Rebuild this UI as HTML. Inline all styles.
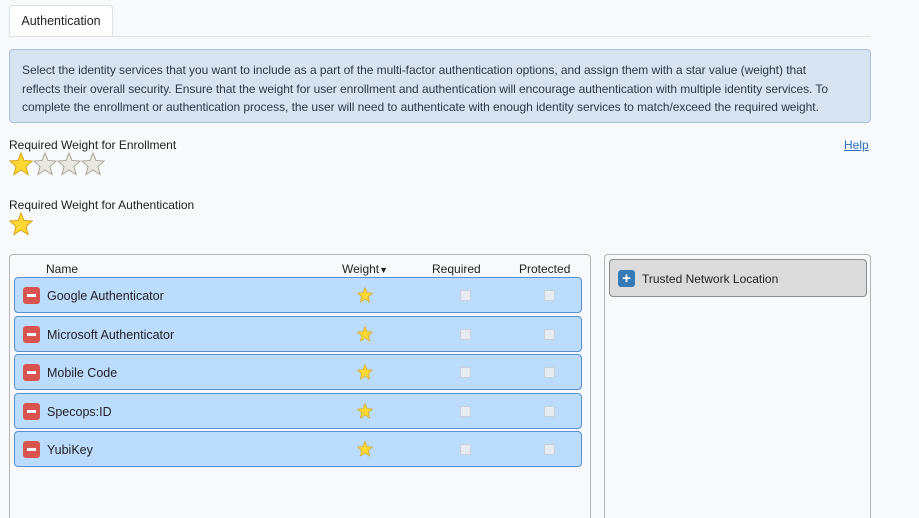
<!DOCTYPE html>
<html><head><style>
body{margin:0;width:919px;height:518px;overflow:hidden;background:#f8f9fa;font-family:"Liberation Sans",sans-serif;font-size:12px;color:#222;position:relative}
.a{position:absolute}
.tab{left:9px;top:5px;width:104px;height:32px;background:#fff;border:1px solid #dde2e8;border-bottom:none;border-radius:4px 4px 0 0;box-sizing:border-box;line-height:31px;text-align:center;font-size:12.5px}
.line{left:9px;top:36px;width:862px;height:1px;background:#dde2e8}
.info{left:9px;top:49px;width:862px;height:74px;box-sizing:border-box;background:#d7e3f1;border:1px solid #a9c3de;border-radius:4px;padding:11px 40px 11px 12px;line-height:18.5px;color:#2a3a4a;font-size:12px;letter-spacing:-0.05px}
.panel{border:1px solid #b5b5b5;border-bottom:none;border-radius:4px 4px 0 0;background:#f8f9fa;box-sizing:border-box}
.row{left:14px;width:568px;height:36px;box-sizing:border-box;background:#bcdcfd;border:1px solid #5b8fd0;border-radius:4px}
.row .m{position:absolute;left:8px;top:9px;width:17px;height:17px;background:#d9534f;border-radius:3px}
.row .m:after{content:"";position:absolute;left:4px;top:7px;width:9px;height:3px;background:#fff}
.row .t{position:absolute;left:32px;top:11px;font-size:12.5px}
.row .s{position:absolute;left:342px;top:9px}
.cb{position:absolute;top:12px;width:9px;height:9px;border:1px solid #c8d0d8;background:#e6ecf2;border-radius:2px}
</style></head><body>
<div class="a tab">Authentication</div>
<div class="a line"></div>
<div class="a info">Select the identity services that you want to include as a part of the multi-factor authentication options, and assign them with a star value (weight) that reflects their overall security. Ensure that the weight for user enrollment and authentication will encourage authentication with multiple identity services. To complete the enrollment or authentication process, the user will need to authenticate with enough identity services to match/exceed the required weight.</div>
<div class="a" style="left:9px;top:138px">Required Weight for Enrollment</div>
<div class="a" style="left:844px;top:138px;color:#2a6fc0;text-decoration:underline">Help</div>
<svg class="a" style="left:9px;top:152px" width="100" height="26" viewBox="0 0 100 26">
<defs><path id="st" d="M12 1 L15 8.5 L23 9 L17 14.5 L19 22.5 L12 18 L5 22.5 L7 14.5 L1 9 L9 8.5Z"/></defs>
<use href="#st" fill="#fdd835" stroke="#d4a514"/>
<use href="#st" x="24" fill="#e8e7e2" stroke="#aaa69a"/>
<use href="#st" x="48" fill="#e8e7e2" stroke="#aaa69a"/>
<use href="#st" x="72" fill="#e8e7e2" stroke="#aaa69a"/>
</svg>
<div class="a" style="left:9px;top:198px">Required Weight for Authentication</div>
<svg class="a" style="left:9px;top:212px" width="26" height="26" viewBox="0 0 26 26"><path d="M12 1 L15 8.5 L23 9 L17 14.5 L19 22.5 L12 18 L5 22.5 L7 14.5 L1 9 L9 8.5Z" fill="#fdd835" stroke="#d4a514"/></svg>
<div class="a panel" style="left:9px;top:254px;width:582px;height:264px"></div>
<div class="a" style="left:46px;top:262px">Name</div>
<div class="a" style="left:342px;top:262px">Weight<span style="font-size:9px">▼</span></div>
<div class="a" style="left:432px;top:262px">Required</div>
<div class="a" style="left:519px;top:262px">Protected</div>
<div class="a row" style="top:277px"><div class="m"></div><div class="t">Google Authenticator</div><svg class="s" width="16" height="16" viewBox="0 0 24 24"><path d="M12 1 L15 8.5 L23 9 L17 14.5 L19 22.5 L12 18 L5 22.5 L7 14.5 L1 9 L9 8.5Z" fill="#fdd835" stroke="#d4a514"/></svg><div class="cb" style="left:445px"></div><div class="cb" style="left:529px"></div></div>
<div class="a row" style="top:316px"><div class="m"></div><div class="t">Microsoft Authenticator</div><svg class="s" width="16" height="16" viewBox="0 0 24 24"><path d="M12 1 L15 8.5 L23 9 L17 14.5 L19 22.5 L12 18 L5 22.5 L7 14.5 L1 9 L9 8.5Z" fill="#fdd835" stroke="#d4a514"/></svg><div class="cb" style="left:445px"></div><div class="cb" style="left:529px"></div></div>
<div class="a row" style="top:354px"><div class="m"></div><div class="t">Mobile Code</div><svg class="s" width="16" height="16" viewBox="0 0 24 24"><path d="M12 1 L15 8.5 L23 9 L17 14.5 L19 22.5 L12 18 L5 22.5 L7 14.5 L1 9 L9 8.5Z" fill="#fdd835" stroke="#d4a514"/></svg><div class="cb" style="left:445px"></div><div class="cb" style="left:529px"></div></div>
<div class="a row" style="top:393px"><div class="m"></div><div class="t">Specops:ID</div><svg class="s" width="16" height="16" viewBox="0 0 24 24"><path d="M12 1 L15 8.5 L23 9 L17 14.5 L19 22.5 L12 18 L5 22.5 L7 14.5 L1 9 L9 8.5Z" fill="#fdd835" stroke="#d4a514"/></svg><div class="cb" style="left:445px"></div><div class="cb" style="left:529px"></div></div>
<div class="a row" style="top:431px"><div class="m"></div><div class="t">YubiKey</div><svg class="s" width="16" height="16" viewBox="0 0 24 24"><path d="M12 1 L15 8.5 L23 9 L17 14.5 L19 22.5 L12 18 L5 22.5 L7 14.5 L1 9 L9 8.5Z" fill="#fdd835" stroke="#d4a514"/></svg><div class="cb" style="left:445px"></div><div class="cb" style="left:529px"></div></div>
<div class="a panel" style="left:604px;top:254px;width:267px;height:264px"></div>
<div class="a" style="left:609px;top:259px;width:258px;height:38px;box-sizing:border-box;background:#dcdbdb;border:1px solid #8d8d8d;border-radius:4px">
<div style="position:absolute;left:8px;top:10px;width:17px;height:17px;background:#337ab7;border-radius:3px;color:#fff;font-weight:bold;font-size:15px;line-height:17px;text-align:center">+</div>
<div style="position:absolute;left:32px;top:12px">Trusted Network Location</div></div>
</body></html>
